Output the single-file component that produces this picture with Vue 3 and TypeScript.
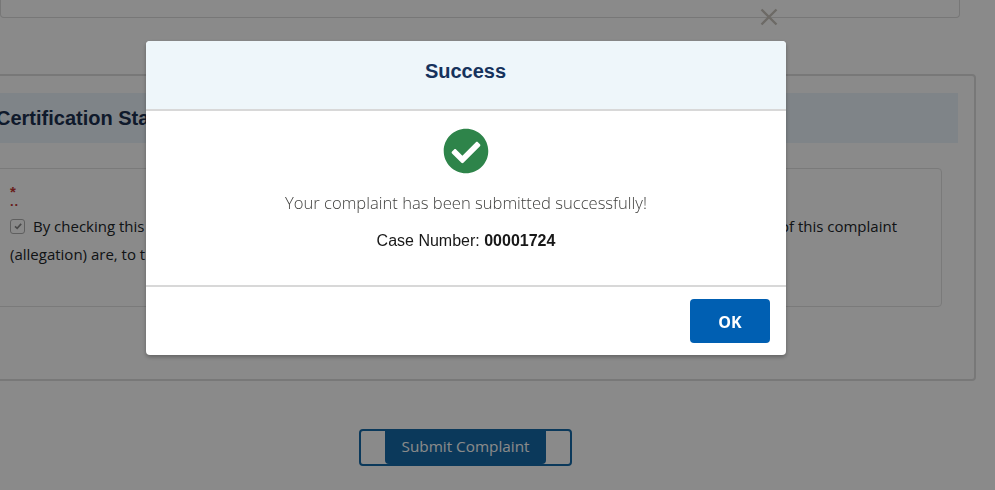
<script setup lang="ts">
const caseNumber = '00001724'
</script>

<template>
  <div class="page">
    <div class="top-card"></div>
    <section class="panel">
      <h2 class="band">Certification Statement</h2>
      <div class="inner">
        <div class="req"><span>*</span><span class="dots">..</span></div>
        <div class="line">
          <span class="check-wrap">
            <span class="box">
              <svg viewBox="0 0 12 12" width="10" height="10"><path d="M2.4 6.4 5 8.8 9.8 3.4" fill="none" stroke="#8a8a8a" stroke-width="2" /></svg>
            </span>
            By checking this box, I certify that the facts and information
          </span>
          <span>of this complaint</span>
        </div>
        <div class="line2">(allegation) are, to the best of my knowledge, true and correct.</div>
      </div>
    </section>
    <div class="actions">
      <div class="submit-frame"><button class="submit" type="button">Submit Complaint</button></div>
    </div>
    <svg class="close-x" viewBox="0 0 18 18" width="18" height="18"><path d="M1.5 1.5 16.5 16.5M16.5 1.5 1.5 16.5" stroke="#c9c4bd" stroke-width="2.4" fill="none" /></svg>
  </div>

  <div class="overlay"></div>

  <div class="modal" role="dialog">
    <header class="modal-head"><h1>Success</h1></header>
    <div class="modal-body">
      <svg class="ok-icon" viewBox="0 0 512 512" width="46" height="46">
        <path fill="#2e844a" d="M504 256c0 136.967-111.033 248-248 248S8 392.967 8 256 119.033 8 256 8s248 111.033 248 248zM227.314 387.314l184-184c6.248-6.248 6.248-16.379 0-22.627l-22.627-22.627c-6.248-6.249-16.379-6.249-22.628 0L216 308.118l-70.059-70.059c-6.248-6.248-16.379-6.248-22.628 0l-22.627 22.627c-6.248 6.248-6.248 16.379 0 22.627l104 104c6.249 6.249 16.379 6.249 22.628.001z" />
      </svg>
      <p class="msg">Your complaint has been submitted successfully!</p>
      <p class="case">Case Number: <strong>{{ caseNumber }}</strong></p>
    </div>
    <footer class="modal-foot"><button class="ok" type="button">OK</button></footer>
  </div>
</template>

<style>
html, body { margin: 0; height: 100%; overflow: hidden; background: #fff; }
</style>

<style scoped>
.page {
  width: 995px;
  height: 490px;
  overflow: hidden;
  position: relative;
  font-family: "Open Sans", sans-serif;
  font-size: 15px;
  color: #212529;
}
.top-card {
  height: 18px;
  width: 960px;
  box-sizing: border-box;
  border: 1px solid #dcdcdc;
  border-top: 0;
  border-radius: 0 0 4px 4px;
}
.panel {
  box-sizing: border-box;
  width: 986px;
  height: 307px;
  margin: 56px 0 0 -10px;
  padding: 17px 16px 0 0;
  border: 2px solid #dedede;
  border-radius: 4px;
}
.band {
  margin: 0;
  height: 50px;
  padding-left: 4px;
  background: #ebf4fb;
  font: bold 20px/50px "Liberation Sans", sans-serif;
  color: #1c3050;
}
.inner {
  box-sizing: border-box;
  height: 139px;
  margin: 25px 16px 0 -10px;
  padding: 17px 44px 0 27px;
  border: 1px solid #e2e2e2;
  border-radius: 4px;
}
.req {
  height: 29px;
  display: flex;
  flex-direction: column;
  color: #c23934;
  font: bold 15px/11px "Liberation Sans", sans-serif;
}
.req .dots { font-size: 13px; line-height: 9px; letter-spacing: 1px; }
.line {
  display: flex;
  justify-content: space-between;
  height: 28px;
  line-height: 22px;
  white-space: nowrap;
}
.check-wrap { display: flex; align-items: center; gap: 8px; height: 22px; }
.box {
  width: 13px;
  height: 13px;
  border: 1px solid #b0b0b0;
  border-radius: 3px;
  display: inline-flex;
  align-items: center;
  justify-content: center;
}
.line2 { line-height: 22px; white-space: nowrap; }
.actions { display: flex; margin-top: 48px; padding-left: 359px; }
.submit-frame {
  box-sizing: border-box;
  width: 213px;
  height: 37px;
  border: 2px solid #156aa8;
  border-radius: 4px;
  display: flex;
  justify-content: center;
  align-items: flex-start;
}
.submit {
  width: 161px;
  height: 33px;
  padding: 0 0 2px;
  border: 0;
  border-radius: 0 0 4px 4px;
  background: #156aa8;
  color: #fff;
  font: 15.3px/31px "Open Sans", sans-serif;
}
.close-x { position: absolute; left: 760px; top: 8px; }
.overlay {
  position: fixed;
  inset: 0;
  background: rgba(0, 0, 0, 0.46);
}
.modal {
  position: fixed;
  left: 146px;
  top: 41px;
  width: 640px;
  height: 314px;
  background: #fff;
  border-radius: 4px;
  box-shadow: 0 2px 4px rgba(0, 0, 0, 0.3);
  display: flex;
  flex-direction: column;
  overflow: hidden;
}
.modal-head {
  height: 70px;
  box-sizing: border-box;
  background: #eef6fa;
  border-bottom: 2px solid #d8d8d8;
  display: flex;
  align-items: center;
  justify-content: center;
}
.modal-head h1 {
  margin: 0 1px 8px 0;
  font: bold 20px/24px "Liberation Sans", sans-serif;
  color: #16325c;
}
.modal-body {
  height: 174px;
  box-sizing: border-box;
  padding-top: 17px;
  display: flex;
  flex-direction: column;
  align-items: center;
  text-align: center;
}
.ok-icon { display: block; }
.msg {
  margin: 17px 0 0;
  font: 300 16.6px/24px "Open Sans", sans-serif;
  color: #3e3e3c;
}
.case {
  margin: 16px 0 0;
  font: 16px/20px "Liberation Sans", sans-serif;
  color: #181818;
}
.modal-foot {
  flex: 1;
  border-top: 2px solid #d8d8d8;
  display: flex;
  justify-content: flex-end;
  align-items: flex-start;
  padding: 12px 16px 0 0;
}
.ok {
  width: 80px;
  height: 44px;
  border: 0;
  border-radius: 4px;
  background: #005fb2;
  color: #fff;
  font: bold 16px/44px "Open Sans", sans-serif;
}
</style>
